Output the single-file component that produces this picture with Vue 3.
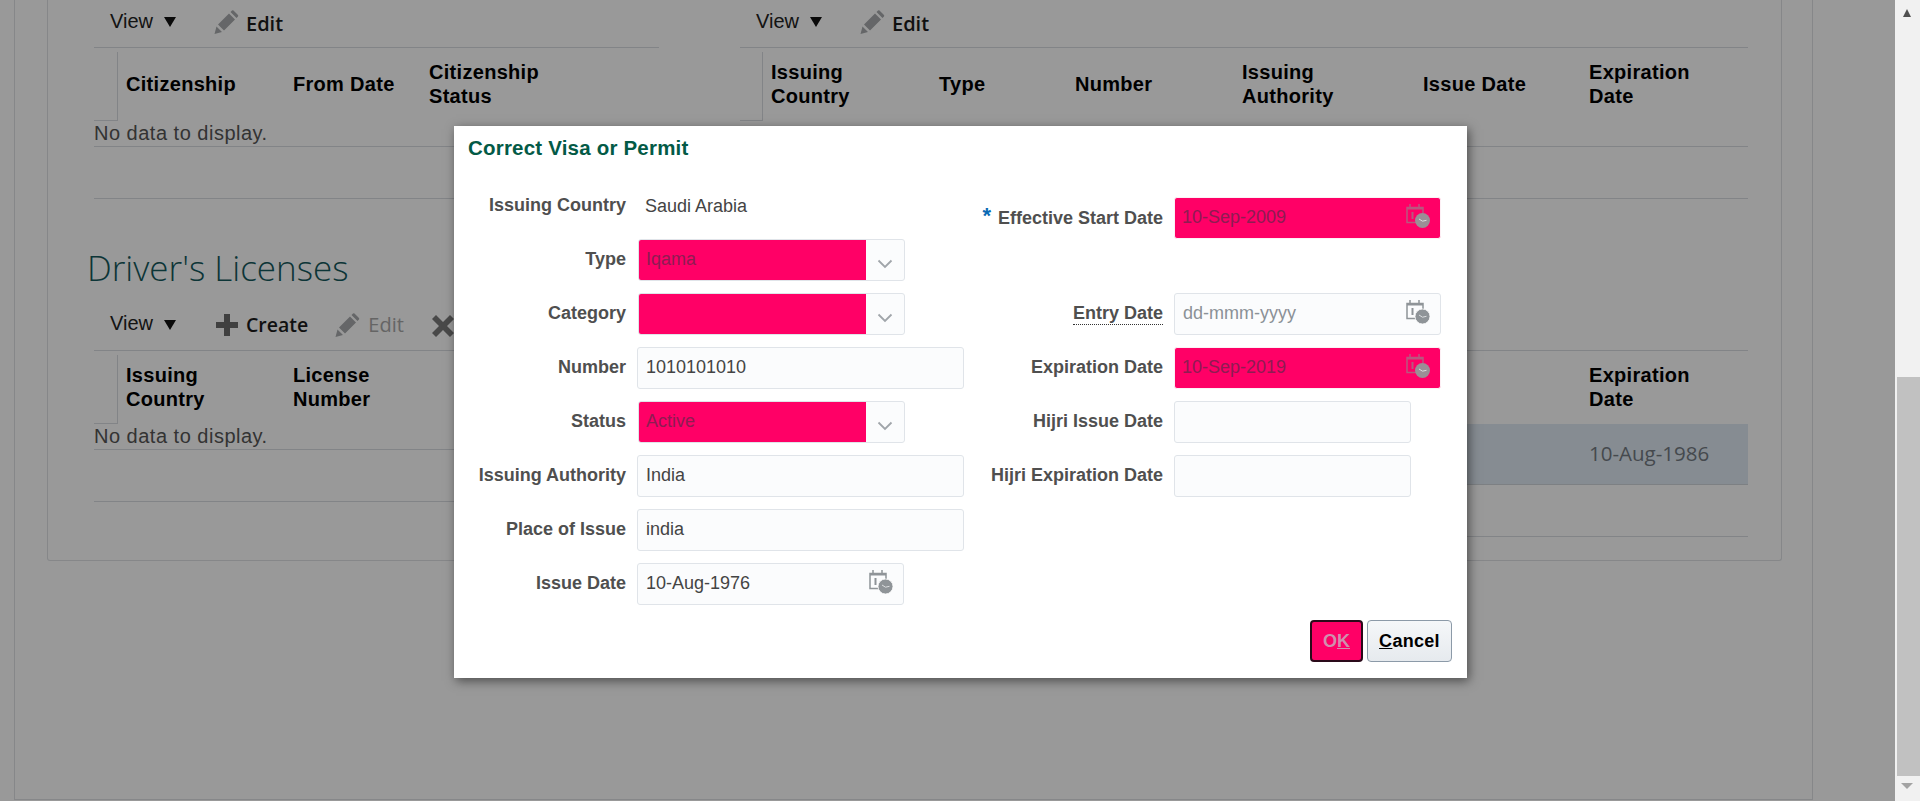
<script setup>
const leftRows = [
  { label: 'Issuing Country', kind: 'plain', value: 'Saudi Arabia' },
  { label: 'Type', kind: 'select', value: 'Iqama' },
  { label: 'Category', kind: 'select', value: '' },
  { label: 'Number', kind: 'input', value: '1010101010' },
  { label: 'Status', kind: 'select', value: 'Active' },
  { label: 'Issuing Authority', kind: 'input', value: 'India' },
  { label: 'Place of Issue', kind: 'input', value: 'india' },
  { label: 'Issue Date', kind: 'date', value: '10-Aug-1976' }
]

const rightRows = [
  { label: 'Effective Start Date', kind: 'date-error', value: '10-Sep-2009', required: true, gap: true },
  { label: 'Entry Date', kind: 'date-wide', value: 'dd-mmm-yyyy', hint: true, placeholder: true },
  { label: 'Expiration Date', kind: 'date-error', value: '10-Sep-2019' },
  { label: 'Hijri Issue Date', kind: 'short', value: '' },
  { label: 'Hijri Expiration Date', kind: 'short', value: '' }
]

const isDate = (row) => row.kind.startsWith('date')
</script>

<template>
  <div class="page">
    <div class="main">
      <div class="outer">
        <div class="panel">
          <div class="two-tables">
            <div class="block">
              <div class="toolbar">
                <span class="view">View</span><span class="caret"></span>
                <svg class="pencil first" viewBox="0 0 24 24"><path d="M0 24 2 16.500 7.500 22ZM3.500 14.500 14.500 3.500 20.500 9.500 9.500 20.500ZM16 2 17.500.5Q18.300 0 19 .5L23.500 5Q24 5.700 23.500 6.500L22 8Z" /></svg>
                <span class="tool">Edit</span>
              </div>
              <div class="thead cols-left">
                <div class="gutter"></div>
                <div class="th">Citizenship</div>
                <div class="th">From Date</div>
                <div class="th">Citizenship<br>Status</div>
              </div>
              <div class="empty-row">No data to display.</div>
              <div class="foot"></div>
            </div>

            <div class="block">
              <div class="toolbar">
                <span class="view">View</span><span class="caret"></span>
                <svg class="pencil first" viewBox="0 0 24 24"><path d="M0 24 2 16.500 7.500 22ZM3.500 14.500 14.500 3.500 20.500 9.500 9.500 20.500ZM16 2 17.500.5Q18.300 0 19 .5L23.500 5Q24 5.700 23.500 6.500L22 8Z" /></svg>
                <span class="tool">Edit</span>
              </div>
              <div class="thead cols-right">
                <div class="gutter"></div>
                <div class="th">Issuing<br>Country</div>
                <div class="th">Type</div>
                <div class="th">Number</div>
                <div class="th">Issuing<br>Authority</div>
                <div class="th">Issue Date</div>
                <div class="th">Expiration<br>Date</div>
              </div>
              <div class="empty-row"></div>
              <div class="foot"></div>
            </div>
          </div>

          <h2 class="section-title">Driver's Licenses</h2>

          <div class="two-tables">
            <div class="block">
              <div class="toolbar lower">
                <span class="view">View</span><span class="caret"></span>
                <svg class="plus" viewBox="0 0 22 22"><path d="M8 0h6v8h8v6h-8v8H8v-8H0V8h8Z" /></svg>
                <span class="tool narrow">Create</span>
                <svg class="pencil second" viewBox="0 0 24 24"><path d="M0 24 2 16.500 7.500 22ZM3.500 14.500 14.500 3.500 20.500 9.500 9.500 20.500ZM16 2 17.500.5Q18.300 0 19 .5L23.500 5Q24 5.700 23.500 6.500L22 8Z" /></svg>
                <span class="tool off">Edit</span>
                <svg class="cross" viewBox="0 0 22 22"><path d="M4 0 11 7 18 0 22 4 15 11 22 18 18 22 11 15 4 22 0 18 7 11 0 4Z" /></svg>
              </div>
              <div class="thead cols-left">
                <div class="gutter"></div>
                <div class="th">Issuing<br>Country</div>
                <div class="th">License<br>Number</div>
              </div>
              <div class="empty-row">No data to display.</div>
              <div class="foot"></div>
            </div>

            <div class="block">
              <div class="toolbar"></div>
              <div class="thead cols-right">
                <div class="gutter"></div>
                <div class="th"></div>
                <div class="th"></div>
                <div class="th"></div>
                <div class="th"></div>
                <div class="th"></div>
                <div class="th">Expiration<br>Date</div>
              </div>
              <div class="data-row cols-right">
                <div class="gutter plain"></div>
                <div class="td"></div>
                <div class="td"></div>
                <div class="td"></div>
                <div class="td"></div>
                <div class="td"></div>
                <div class="td">10-Aug-1986</div>
              </div>
              <div class="foot"></div>
            </div>
          </div>
        </div>
      </div>

      <div class="scrim"></div>

      <div class="dialog">
        <div class="dialog-title">Correct Visa or Permit</div>
        <div class="form">
          <div class="form-col">
            <div class="row" v-for="row in leftRows" :key="row.label">
              <div class="label">{{ row.label }}</div>
              <div v-if="row.kind === 'plain'" class="plain-value">{{ row.value }}</div>
              <div v-else-if="row.kind === 'select'" class="select">
                <div class="select-value">{{ row.value }}</div>
                <div class="select-arrow">
                  <svg width="16" height="10" viewBox="0 0 16 10"><path d="M1.500 1.500 8 8 14.500 1.500" fill="none" stroke="#a0a5aa" stroke-width="1.800" /></svg>
                </div>
              </div>
              <div v-else class="field" :class="row.kind">
                {{ row.value }}
                <svg v-if="isDate(row)" class="cal" viewBox="0 0 24 24">
                  <path class="cal-line" d="M13 18.500H1V3.500H17V9" />
                  <path class="cal-line" d="M4 0V3.500M13 0V3.500" />
                  <path class="cal-band" d="M1 3h16v2.500H1Z" />
                  <path class="cal-band" d="M5.500 8h2v7h-2Z" />
                  <circle class="cal-dot" cx="16.500" cy="16.500" r="7.500" />
                  <path d="M13 15 16.500 17.200 20.500 16.300" fill="none" stroke="#dcdee0" stroke-width="1" />
                </svg>
              </div>
            </div>
          </div>

          <div class="form-col second-col">
            <div class="row" :class="{ spaced: row.gap }" v-for="row in rightRows" :key="row.label">
              <div class="label wide">
                <span v-if="row.required" class="star">*</span>
                <span :class="{ hint: row.hint }">{{ row.label }}</span>
              </div>
              <div class="field" :class="[row.kind, { placeholder: row.placeholder }]">
                {{ row.value }}
                <svg v-if="isDate(row)" class="cal" :class="{ dim: row.kind === 'date-error' }" viewBox="0 0 24 24">
                  <path class="cal-line" d="M13 18.500H1V3.500H17V9" />
                  <path class="cal-line" d="M4 0V3.500M13 0V3.500" />
                  <path class="cal-band" d="M1 3h16v2.500H1Z" />
                  <path class="cal-band" d="M5.500 8h2v7h-2Z" />
                  <circle class="cal-dot" cx="16.500" cy="16.500" r="7.500" />
                  <path d="M13 15 16.500 17.200 20.500 16.300" fill="none" stroke="#dcdee0" stroke-width="1" />
                </svg>
              </div>
            </div>
          </div>
        </div>
        <div class="actions">
          <button class="btn ok">O<u>K</u></button>
          <button class="btn cancel"><u>C</u>ancel</button>
        </div>
      </div>
    </div>

    <div class="scrollbar">
      <div class="arrow-up"></div>
      <div class="thumb"></div>
      <div class="arrow-down"></div>
    </div>
  </div>
</template>

<style>
html,
body {
  margin: 0;
  overflow: hidden;
}
</style>

<style scoped>
.page {
  display: flex;
  height: 801px;
  overflow: hidden;
  background: #fff;
  font-family: "Liberation Sans", Arial, sans-serif;
}

.main {
  flex: 1;
  position: relative;
}

.outer {
  box-sizing: border-box;
  width: 1799px;
  height: 800px;
  margin-left: 14px;
  padding-left: 32px;
  border: 1px solid #dfe2e5;
  border-top: 0;
}

.panel {
  box-sizing: border-box;
  width: 1735px;
  height: 561px;
  padding-left: 46px;
  border: 1px solid #dfe2e5;
  border-top: 0;
  border-radius: 0 0 3px 3px;
}

.two-tables {
  display: grid;
  grid-template-columns: 565px 1008px;
  column-gap: 81px;
}

.toolbar {
  box-sizing: border-box;
  display: flex;
  height: 48px;
  border-bottom: 1px solid #d9dde1;
}

.view {
  margin: 9px 0 0 16px;
  font-size: 20px;
  line-height: 24px;
  color: #222;
}

.lower .view {
  margin-top: 8px;
}

.caret {
  width: 0;
  height: 0;
  margin: 17px 0 0 11px;
  border-left: 6.500px solid transparent;
  border-right: 6.500px solid transparent;
  border-top: 10px solid #111;
}

.pencil {
  width: 25px;
  height: 24px;
  fill: #a8abad;
}

.pencil.first {
  margin: 10px 7px 0 38px;
}

.pencil.second {
  margin: 10px 8px 0 27px;
}

.plus {
  width: 22px;
  height: 22px;
  margin: 11px 8px 0 40px;
  fill: #6b6b6b;
}

.cross {
  width: 22px;
  height: 22px;
  margin: 12px 0 0 28px;
  fill: #7a7a7a;
}

.tool {
  margin-top: 11px;
  font-family: "Open Sans", sans-serif;
  font-size: 20px;
  font-weight: 600;
  line-height: 26px;
  color: #1c1c1c;
}

.lower .tool {
  margin-top: 9px;
}

.tool.narrow {
  font-size: 19.500px;
}

.tool.off {
  font-weight: 400;
  color: #a8a8a8;
}

.thead {
  display: grid;
  height: 73px;
  box-sizing: border-box;
  padding-bottom: 2px;
  align-items: center;
}

.cols-left {
  grid-template-columns: 24px 167px 136px 1fr;
}

.cols-right {
  grid-template-columns: 23px 168px 136px 167px 181px 166px 1fr;
}

.gutter {
  box-sizing: border-box;
  align-self: stretch;
  margin: 4px 0 -2px;
  border-right: 1px solid #d9dde1;
  border-bottom: 1px solid #d9dde1;
}

.gutter.plain {
  margin: 0;
  border: 0;
}

.th {
  padding-left: 8px;
  font-size: 20px;
  font-weight: 700;
  line-height: 24px;
  letter-spacing: 0.300px;
  color: #000;
}

.empty-row {
  box-sizing: border-box;
  height: 26px;
  font-size: 20px;
  line-height: 25px;
  letter-spacing: 0.500px;
  color: #555;
  border-bottom: 1px solid #d9dde1;
}

.foot {
  box-sizing: border-box;
  height: 52px;
  border-bottom: 1px solid #d9dde1;
}

.section-title {
  box-sizing: border-box;
  height: 104px;
  margin: 0;
  padding: 44px 0 0 0;
  margin-left: -7px;
  font-family: "Open Sans", sans-serif;
  font-size: 35px;
  font-weight: 300;
  line-height: 50px;
  color: #14595c;
}

.data-row {
  display: grid;
  box-sizing: border-box;
  height: 61px;
  padding-bottom: 2px;
  align-items: center;
  background: #dfeaf4;
  border-bottom: 1px solid #d0d6db;
}

.td {
  padding-left: 8px;
  font-family: "Open Sans", sans-serif;
  font-size: 20.500px;
  color: #747b82;
}

.scrim {
  position: absolute;
  inset: 0;
  background: rgba(0, 0, 0, 0.4);
}

.dialog {
  position: absolute;
  left: 454px;
  top: 126px;
  box-sizing: border-box;
  display: flex;
  flex-direction: column;
  width: 1013px;
  height: 552px;
  background: #fff;
  box-shadow: 2px 3px 10px rgba(0, 0, 0, 0.5);
}

.dialog-title {
  height: 59px;
  padding: 8px 0 0 14px;
  box-sizing: border-box;
  font-size: 20.500px;
  font-weight: 700;
  line-height: 27px;
  letter-spacing: 0.200px;
  color: #035a46;
}

.form {
  display: flex;
}

.form-col {
  width: 516px;
}

.second-col {
  width: auto;
  padding-top: 12px;
}

.row {
  display: flex;
  align-items: center;
  gap: 12px;
  height: 42px;
  margin-bottom: 12px;
}

.row.spaced {
  margin-bottom: 54px;
}

.label {
  width: 172px;
  margin: -3px -1px 0 0;
  text-align: right;
  font-size: 18px;
  font-weight: 700;
  line-height: 22px;
  color: #4f4f4f;
  flex-shrink: 0;
}

.label.wide {
  width: 193px;
}

.star {
  margin-right: 7px;
  font-size: 22px;
  vertical-align: 1px;
  color: #0a6ab4;
}

.hint {
  border-bottom: 1px dotted #333;
  padding-bottom: 1px;
}

.plain-value {
  padding-left: 8px;
  font-size: 18px;
  color: #444;
}

.field {
  position: relative;
  box-sizing: border-box;
  height: 42px;
  padding-left: 8px;
  font-size: 18px;
  line-height: 39px;
  color: #444;
  background: #fbfcfd;
  border: 1px solid #e0e4e9;
  border-radius: 3px;
}

.input {
  width: 327px;
}

.date {
  width: 267px;
}

.date-wide {
  width: 267px;
}

.date-error {
  width: 267px;
  padding-left: 7px;
  color: #8e1c52;
  background: #ff0066;
  border-color: #fdf0f5;
}

.short {
  width: 237px;
}

.placeholder {
  color: #8b9197;
}

.select {
  display: flex;
  box-sizing: border-box;
  width: 267px;
  height: 42px;
  margin-left: 1px;
  background: #fbfcfd;
  border: 1px solid #e0e4e9;
  border-radius: 3px;
}

.select-value {
  box-sizing: border-box;
  width: 227px;
  padding-left: 7px;
  font-size: 18px;
  line-height: 39px;
  color: #8e1c52;
  background: #ff0066;
  border-radius: 2px 0 0 2px;
}

.select-arrow {
  display: flex;
  flex: 1;
  align-items: center;
  justify-content: center;
  padding-top: 7px;
}

.cal {
  position: absolute;
  top: 6px;
  right: 10px;
  width: 24px;
  height: 24px;
}

.cal-line {
  fill: none;
  stroke: #8f9498;
  stroke-width: 1.500;
}

.cal-band {
  fill: #8f9498;
}

.cal-dot {
  fill: #8f9498;
  stroke: #fff;
  stroke-width: 0.800;
}

.dim .cal-line {
  stroke: #b9577f;
}

.dim .cal-band {
  fill: #b9577f;
}

.dim .cal-dot {
  fill: #9b8f96;
  stroke: none;
}

.actions {
  display: flex;
  justify-content: flex-end;
  gap: 4px;
  margin-top: auto;
  padding: 0 15px 16px 0;
}

.btn {
  box-sizing: border-box;
  height: 42px;
  padding: 0;
  font-family: "Liberation Sans", Arial, sans-serif;
  font-size: 18px;
  font-weight: 700;
}

.ok {
  width: 53px;
  color: #cf8fae;
  background: #ff0066;
  border: 2px solid #2a0a1a;
  border-radius: 4px;
}

.cancel {
  width: 85px;
  letter-spacing: 0.300px;
  color: #000;
  background: linear-gradient(#f5f7f9, #e6eaee);
  border: 1px solid #8c9aa8;
  border-radius: 4px;
}

.scrollbar {
  position: relative;
  flex: 0 0 25px;
  background: #f1f1f1;
}

.arrow-up {
  position: absolute;
  top: 9px;
  left: 8px;
  border-left: 4.500px solid transparent;
  border-right: 4.500px solid transparent;
  border-bottom: 8px solid #505050;
}

.thumb {
  position: absolute;
  top: 377px;
  left: 2px;
  right: 0;
  height: 399px;
  background: #c1c1c1;
}

.arrow-down {
  position: absolute;
  top: 783px;
  left: 6px;
  border-left: 6px solid transparent;
  border-right: 6px solid transparent;
  border-top: 6px solid #a3a3a3;
}
</style>
